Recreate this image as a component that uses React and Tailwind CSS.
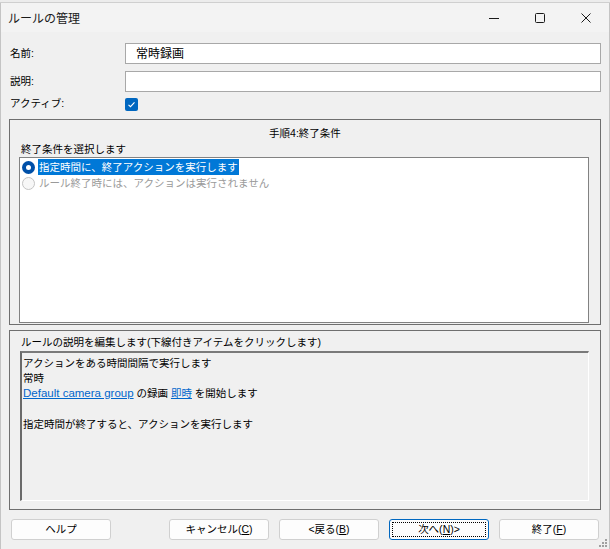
import React from 'react';

const font = 'font-[Liberation_Sans,Noto_Sans_CJK_JP,sans-serif]';

function WinButton({ children, focused, className = '' }) {
  return (
    <button
      className={`h-[21px] w-[100px] rounded-[3px] border text-[10.5px] leading-none text-black ${
        focused
          ? 'border-[#0067c0] bg-[#fdfdfd] outline-1 outline-dotted outline-black outline-offset-[-4px]'
          : 'border-[#d0d0d0] bg-[#fdfdfd]'
      } ${className}`}
    >
      {children}
    </button>
  );
}

function Radio({ checked }) {
  if (checked) {
    return (
      <span className="flex h-[13px] w-[13px] items-center justify-center rounded-full bg-[#0050a8]">
        <span className="h-[5px] w-[5px] rounded-full bg-white" />
      </span>
    );
  }
  return <span className="h-[13px] w-[13px] rounded-full border border-[#c4c4c4] bg-[#f7f7f7]" />;
}

export default function App() {
  return (
    <div className={`relative h-[549px] w-[610px] overflow-hidden bg-white ${font}`}>
      <div className="h-[3px] border-b border-[#cfcfcf] bg-[#ececec]" />
      <div className="flex h-[546px] flex-col border-x border-[#c4c4c4] bg-[#f0f0f0]">
        {/* title bar */}
        <div className="flex h-[29px] shrink-0 items-center bg-[#f3f3f3]">
          <span className="pl-[7px] text-[12px] text-[#1a1a1a] font-[Noto_Sans_CJK_JP,sans-serif]">
            ルールの管理
          </span>
          <div className="ml-auto flex h-full">
            <div className="flex w-[46px] items-center justify-center">
              <svg width="10" height="10" viewBox="0 0 10 10">
                <path d="M0 5.5h10" stroke="#1a1a1a" strokeWidth="1" />
              </svg>
            </div>
            <div className="flex w-[46px] items-center justify-center">
              <svg width="10" height="10" viewBox="0 0 10 10">
                <rect x="0.5" y="0.5" width="9" height="9" rx="1" fill="none" stroke="#1a1a1a" strokeWidth="1" />
              </svg>
            </div>
            <div className="flex w-[46px] items-center justify-center">
              <svg width="10" height="10" viewBox="0 0 10 10">
                <path d="M0.5 0.5l9 9M9.5 0.5l-9 9" stroke="#1a1a1a" strokeWidth="1" />
              </svg>
            </div>
          </div>
        </div>

        {/* form */}
        <div className="pt-[11px] text-[10.5px] text-black">
          <div className="flex items-center">
            <span className="w-[124px] pl-[9px]">名前:</span>
            <div className="flex h-[21px] w-[476px] items-center border border-[#a8a8a8] bg-white px-[10px] text-[12px]">
              常時録画
            </div>
          </div>
          <div className="mt-[7px] flex items-center">
            <span className="w-[124px] pl-[9px]">説明:</span>
            <div className="h-[21px] w-[476px] border border-[#a8a8a8] bg-white" />
          </div>
          <div className="mt-[5px] flex h-[14px] items-center">
            <span className="w-[124px] pl-[9px]">アクティブ:</span>
            <span className="flex h-[13px] w-[13px] items-center justify-center rounded-[2px] bg-[#0067c0]">
              <svg width="9" height="9" viewBox="0 0 9 9">
                <path d="M1.5 4.8l2 1.9 4-4.4" fill="none" stroke="white" strokeWidth="1.1" />
              </svg>
            </span>
          </div>
        </div>

        {/* step panel */}
        <div className="ml-[8px] mt-[8px] flex h-[206px] w-[592px] flex-col border border-[#6f6f6f] pb-[1px] text-[10.5px] leading-[16px] text-black">
          <div className="pt-[5px] text-center">手順4:終了条件</div>
          <div className="pl-[11px]">終了条件を選択します</div>
          <div className="ml-[9px] flex-1 w-[570px] border border-[#828282] bg-white pt-[1px]">
            <div className="flex h-[16px] items-center pl-[2px]">
              <Radio checked />
              <span className="ml-[3px] bg-[#0078d7] px-[1px] text-white">
                指定時間に、終了アクションを実行します
              </span>
            </div>
            <div className="flex h-[16px] items-center pl-[2px]">
              <Radio />
              <span className="ml-[3px] px-[1px] text-[#9a9a9a]">ルール終了時には、アクションは実行されません</span>
            </div>
          </div>
        </div>

        {/* description panel */}
        <div className="ml-[8px] mt-[5px] flex h-[180px] w-[592px] flex-col border border-[#6f6f6f] pb-[8px] text-[10.5px] leading-[16px] text-black">
          <div className="pl-[11px] pt-[3px]">ルールの説明を編集します(下線付きアイテムをクリックします)</div>
          <div className="ml-[10px] mt-[1px] flex-1 w-[569px] border-l-2 border-t-2 border-b border-r border-l-[#6a6a6a] border-t-[#7a7a7a] border-b-white border-r-white bg-[#f0f0f0] pl-[1px] pt-[2px]">
            <div>アクションをある時間間隔で実行します</div>
            <div className="mt-[-1px]">常時</div>
            <div className="mt-[-1px]">
              <span className="text-[11.5px] text-[#0066cc] underline">Default camera group</span> の録画{' '}
              <span className="text-[#0066cc] underline">即時</span> を開始します
            </div>
            <div className="h-[16px]" />
            <div className="mt-[-1px]">指定時間が終了すると、アクションを実行します</div>
          </div>
        </div>

        {/* buttons */}
        <div className="ml-[10px] mt-[9px] flex">
          <WinButton>ヘルプ</WinButton>
          <WinButton className="ml-[58px]">
            キャンセル(<span className="underline">C</span>)
          </WinButton>
          <WinButton className="ml-[10px]">
            &lt;戻る(<span className="underline">B</span>)
          </WinButton>
          <WinButton className="ml-[10px]" focused>
            次へ(<span className="underline">N</span>)&gt;
          </WinButton>
          <WinButton className="ml-[10px]">
            終了(<span className="underline">F</span>)
          </WinButton>
        </div>
      </div>

      {/* size grip */}
      <svg className="absolute bottom-[2px] right-[3px]" width="8" height="8" viewBox="0 0 8 8">
        <rect x="6" y="0" width="2" height="2" fill="#a0a0a0" />
        <rect x="3" y="3" width="2" height="2" fill="#a0a0a0" />
        <rect x="6" y="3" width="2" height="2" fill="#a0a0a0" />
        <rect x="0" y="6" width="2" height="2" fill="#a0a0a0" />
        <rect x="3" y="6" width="2" height="2" fill="#a0a0a0" />
        <rect x="6" y="6" width="2" height="2" fill="#a0a0a0" />
      </svg>
    </div>
  );
}
